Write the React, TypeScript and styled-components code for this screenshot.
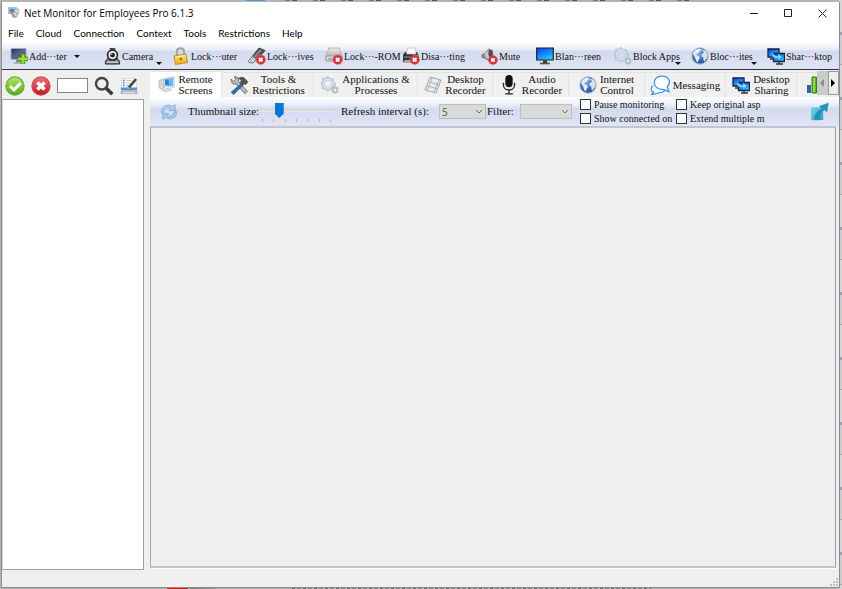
import React from "react";
import styled, { createGlobalStyle } from "styled-components";

const serif = `"Liberation Serif", "Noto Sans CJK SC", serif`;
const sans = `"Open Sans", "Noto Sans CJK SC", sans-serif`;
const menuSans = `Lato, "Noto Sans CJK SC", sans-serif`;

const GlobalStyle = createGlobalStyle`
  * { box-sizing: border-box; }
  body { margin: 0; background: #cfcfcf; overflow: hidden; }
  button, input, select { font: inherit; color: inherit; margin: 0; }
  button { border: 0; padding: 0; background: none; }
  svg { display: block; flex: none; }
`;

const Desktop = styled.div`
  height: 100vh;
  padding: 2px 2px 1px 1px;
  background:
    linear-gradient(90deg, #d92a2a, #b81e1e) 167px 100% / 21px 2px no-repeat,
    linear-gradient(90deg, #777, #999) 190px 100% / 26px 2px no-repeat,
    repeating-linear-gradient(90deg, #666 0 3px, #b8b8b8 3px 5px, #858585 5px 9px, #c4c4c4 9px 11px) 292px 100% / 360px 1px no-repeat,
    repeating-linear-gradient(90deg, #777 0 5px, #bbb 5px 7px, #555 7px 12px, #b3b3b3 12px 28px) 285px 0 / 410px 1px no-repeat,
    linear-gradient(90deg, #4f9bd0, #4f9bd0) 246px 0 / 19px 1px no-repeat,
    repeating-linear-gradient(180deg, #d6d6d6 0 32px, #9aa3b5 32px 35px, #cdcdcd 35px 64px, #a8a8a8 64px 65px) 100% 0 / 3px 100% no-repeat,
    #b4b4b4;
`;

const Window = styled.main`
  display: flex;
  flex-direction: column;
  height: 100%;
  border: 1px solid #8c8c8c;
  border-top: 0;
  background: #efefef;
  font-family: ${serif};
  font-size: 11px;
  line-height: 11px;
  color: #111;
`;

const TitleBar = styled.header`
  display: flex;
  align-items: center;
  height: 22px;
  padding-left: 6px;
  background: #fff;
`;

const Title = styled.h1`
  flex: 1;
  margin: 0 0 0 4px;
  font: 400 10px/16px ${sans};
  color: #000;
`;

const CaptionButton = styled.button`
  display: grid;
  place-items: center;
  width: 34px;
  height: 22px;
`;

const MenuBar = styled.nav`
  display: flex;
  gap: 12px;
  height: 18px;
  padding: 0 6px;
  background: #fff;
  font: 10px/18px ${menuSans};
  color: #000;
`;

const MenuItem = styled.button``;

const ToolBar = styled.div`
  display: grid;
  grid-template-columns: 94fr 68fr 76fr 77fr 77fr 79fr 55fr 78fr 77fr 76fr 72fr;
  flex: none;
  height: 28px;
  padding: 1px 0 0 8px;
  border-bottom: 1px solid #30323a;
  background: linear-gradient(#fff 0, #e7ebf7 8px, #d3daee 9px, #dfe4f5 100%);
  font-size: 10px;
`;

const ToolButton = styled.button`
  position: relative;
  display: flex;
  align-items: center;
  gap: 1px;
  min-width: 0;
  white-space: nowrap;
  text-align: left;
`;

const Arrow = styled.span`
  margin-left: 6px;
  border: 3px solid transparent;
  border-top-color: #111;
  border-bottom: 0;
`;

const CornerArrow = styled(Arrow)`
  position: absolute;
  right: 10px;
  bottom: 4px;
`;

const Body = styled.div`
  display: flex;
  flex: 1;
  min-height: 0;
`;

const Sidebar = styled.aside`
  display: flex;
  flex-direction: column;
  width: 142px;
`;

const SideTools = styled.div`
  display: flex;
  align-items: center;
  gap: 6px;
  height: 29px;
  padding: 2px 0 0 3px;
`;

const IconButton = styled.button`
  display: grid;
  place-items: center;
  justify-self: start;
`;

const SearchBox = styled.input`
  width: 31px;
  height: 15px;
  padding: 0 2px;
  border: 1px solid #858585;
  background: #fff;
`;

const ComputerList = styled.section`
  flex: 1;
  border: 1px solid #9c9ea4;
  border-left-color: #d3d3d6;
  background: #fff;
`;

const Content = styled.section`
  display: flex;
  flex: 1;
  flex-direction: column;
  min-width: 0;
  padding: 1px 0 2px;
  margin-left: 6px;
`;

const TabRow = styled.div`
  display: flex;
  height: 26px;
`;

const Tabs = styled.div`
  display: flex;
  flex: 1;
  min-width: 0;
  overflow: hidden;
`;

const Tab = styled.button<{ $width: number; $active?: boolean }>`
  display: flex;
  flex: none;
  align-items: center;
  justify-content: center;
  gap: 3px;
  width: ${(p) => p.$width}px;
  margin-top: ${(p) => (p.$active ? 0 : 1)}px;
  border: 1px solid #e2e2e2;
  border-width: 1px 1px 0 0;
  background: ${(p) => (p.$active ? "#fff" : "#f0f0f0")};
`;

const TabLabel = styled.span`
  text-align: center;
  white-space: pre;
`;

const Scroller = styled.button<{ $end?: boolean }>`
  display: grid;
  place-items: center;
  width: 11px;
  height: 24px;
  border: 1px solid ${(p) => (p.$end ? "#9b9b9b" : "#c9c9c9")};
  background: ${(p) => (p.$end ? "#ededed" : "#cbcbcb")};
`;

const Controls = styled.div`
  display: grid;
  grid-template-columns: 28px 70px 83px 98px 48px 33px 60px 96px 96px 1fr;
  align-items: center;
  flex: none;
  height: 29px;
  padding: 0 10px;
  background: linear-gradient(#fff 0, #e9edf8 8px, #d4dbef 12px, #dfe4f5 100%);
`;

const Label = styled.label`
  white-space: nowrap;
`;

const SliderBox = styled.div`
  width: 76px;
  padding-top: 1px;
`;

const Slider = styled.input`
  display: block;
  width: 76px;
  height: 16px;
  appearance: none;
  background: linear-gradient(#d0d0d0, #e9e9e9) 0 6px / 100% 3px no-repeat;
  &::-webkit-slider-thumb {
    appearance: none;
    width: 9px;
    height: 15px;
    background: #0878d4;
    clip-path: polygon(0 0, 100% 0, 100% 72%, 50% 100%, 0 72%);
  }
`;

const Ticks = styled.div`
  display: flex;
  justify-content: space-between;
  padding: 0 3px 0 4px;
`;

const Tick = styled.i`
  width: 1px;
  height: 3px;
  background: #b4b4b0;
`;

const SelectBox = styled.span<{ $width: number }>`
  display: grid;
  align-items: center;
  width: ${(p) => p.$width}px;
  & > * { grid-area: 1 / 1; }
  & > svg { justify-self: end; margin-right: 3px; pointer-events: none; }
`;

const Select = styled.select`
  width: 100%;
  height: 15px;
  padding: 0 2px;
  appearance: none;
  border: 1px solid #bdbdbd;
  border-radius: 0;
  background: #dadada;
  font: 10px/12px ${sans};
  color: #555;
`;

const Checks = styled.div`
  display: flex;
  flex-direction: column;
  gap: 3px;
  padding-bottom: 1px;
  font-size: 10px;
`;

const CheckLabel = styled.label`
  display: flex;
  align-items: center;
  gap: 3px;
  white-space: nowrap;
`;

const Check = styled.input`
  flex: none;
  appearance: none;
  width: 11px;
  height: 11px;
  border: 1px solid #333;
  background: #fff;
`;

const ExpandButton = styled.button`
  justify-self: end;
`;

const Screens = styled.div`
  flex: 1;
  margin-right: 3px;
  border: 2px solid #c3c5cf;
  border-left: 1px solid #a2a5b0;
  border-right: 1px solid #9a9da8;
  box-shadow: 0 1px 0 #fff;
  background: #efefef;
`;

const StatusBar = styled.footer`
  display: flex;
  flex: none;
  justify-content: flex-end;
  align-items: flex-end;
  height: 17px;
  padding: 1px;
`;

const HiddenSvg = styled.svg`
  position: absolute;
`;

type P = { s?: number };
const Svg = ({ s = 18, children }: P & { children: React.ReactNode }) => (
  <svg width={s} height={s} viewBox="0 0 18 18" fill="none" aria-hidden="true">{children}</svg>
);

const Gradients = () => (
  <HiddenSvg width="0" height="0" aria-hidden="true">
    <defs>
      <linearGradient id="blue" x1="0" y1="0" x2=".6" y2="1"><stop stopColor="#0a3cf0" /><stop offset="1" stopColor="#22c4ff" /></linearGradient>
      <linearGradient id="slate" x1="0" y1="0" x2="1" y2="1"><stop stopColor="#202858" /><stop offset=".5" stopColor="#5a6794" /><stop offset="1" stopColor="#323c69" /></linearGradient>
      <linearGradient id="gold" x1="0" y1="0" x2="0" y2="1"><stop stopColor="#ffe680" /><stop offset="1" stopColor="#e9aa0d" /></linearGradient>
      <linearGradient id="silver" x1="0" y1="0" x2="0" y2="1"><stop stopColor="#eee" /><stop offset="1" stopColor="#969696" /></linearGradient>
      <linearGradient id="green" x1="0" y1="0" x2="0" y2="1"><stop stopColor="#b7e66a" /><stop offset="1" stopColor="#48ad0d" /></linearGradient>
      <linearGradient id="red" x1="0" y1="0" x2="0" y2="1"><stop stopColor="#ee7676" /><stop offset="1" stopColor="#c4141e" /></linearGradient>
      <linearGradient id="teal" x1="0" y1="0" x2="1" y2="1"><stop stopColor="#7cd3e8" /><stop offset="1" stopColor="#2a9fc0" /></linearGradient>
      <radialGradient id="globe" cx=".4" cy=".35"><stop stopColor="#7cb1e6" /><stop offset="1" stopColor="#2a62ad" /></radialGradient>
    </defs>
  </HiddenSvg>
);

const RedBadge = () => (
  <g>
    <circle cx="12.7" cy="12.7" r="4.800" fill="#d92c34" stroke="#c78080" strokeWidth=".6" />
    <path d="m10.900 10.900 3.600 3.600m0-3.600-3.600 3.600" stroke="#fff" strokeWidth="1.800" />
  </g>
);
const AddComputer = () => (
  <Svg><path d="M1 1.500h15v11H1z" fill="url(#slate)" stroke="#a8acba" /><path d="M6 13h5v2.500H6z" fill="#888" /><path d="M3.500 16h9" stroke="#a7a7a7" strokeWidth="1.500" /><path d="M13 7v10M8 12h10" stroke="#539720" strokeWidth="4.400" /><path d="M13 7.500v9M8.500 12h9" stroke="#9adf35" strokeWidth="2.600" /></Svg>
);
const Camera = () => (
  <Svg s={17}><path d="M1.500 14 4.500 10.500h9l3 3.500v3h-15z" fill="#777" stroke="#292929" /><path d="M3 15h12" stroke="#ddd" strokeWidth="1.400" /><circle cx="9" cy="7.500" r="5.200" fill="#eee" stroke="#292929" strokeWidth="1.800" /><circle cx="9" cy="7.500" r="2.600" fill="#222" /><circle cx="8" cy="6.500" r=".9" fill="#aaa" /><path d="M6 1h6" stroke="#222" strokeWidth="1.600" /></Svg>
);
const Padlock = () => (
  <Svg><path d="M5 9V4.500C5 .4 12 .4 12 4.500V8" stroke="#a7a7a7" strokeWidth="2.200" /><path d="m2 9 12-2 1.500 8.500L3.500 17.500z" fill="url(#gold)" stroke="#c48d16" /><path d="m3.500 10 9.500-1.500" stroke="#fff0a5" /><circle cx="8.800" cy="12" r="1.200" fill="#805c14" /></Svg>
);
const UsbLock = () => (
  <Svg><path d="M3 11 11 1l6 2.500L8 14z" fill="#555" stroke="#444" /><path d="m5 10 7-7.500 2 .8L7 11z" fill="#8a8a8a" /><path d="m.5 13.500 4-4 4 2.500-3.500 4-4-.5z" fill="#ddd" stroke="#777" /><path d="m2.500 13 1 .5m1-2 1 .6" stroke="#555" /><RedBadge /></Svg>
);
const DriveLock = () => (
  <Svg><path d="M4 1h10l3 8v4H1V9z" fill="url(#silver)" stroke="#b2b2b2" /><path d="M1 9h16v5H1z" fill="#dadada" stroke="#999" /><path d="M3 12h5" stroke="#888" /><RedBadge /></Svg>
);
const PrinterLock = () => (
  <Svg><path d="M3 5h12l2 4v6H1V8z" fill="#333" /><path d="M5.500 1h8l.5 6H4.500z" fill="#f8f8f8" stroke="#bbb" strokeWidth=".7" /><path d="M2.500 13h11l1 3H1.500z" fill="#aaa" /><path d="M2 10h6" stroke="#999" /><path d="M16 7v2" stroke="#47cf30" strokeWidth="1.500" /><RedBadge /></Svg>
);
const MuteIcon = () => (
  <Svg s={17}><path d="m1 7 3-1 4-5 4 1.500 1 11-3 1.500-5-4-4-1z" fill="#8c8c8c" stroke="#777" /><path d="m4 6 4-4.500 1 10.500-4-2z" fill="#c9c9c9" /><ellipse cx="10.300" cy="7" rx="2.300" ry="5" fill="#4a4a4a" transform="rotate(-8 10 7)" /><RedBadge /></Svg>
);
const BlueScreen = () => (
  <Svg><path d="M.7 1h16.600v12H.7z" fill="url(#blue)" stroke="#222" strokeWidth="1.200" /><path d="M7 13.500h4V16H7z" fill="#333" /><path d="M4 16.500h10" stroke="#555" strokeWidth="1.600" /></Svg>
);
const Gears = () => (
  <Svg><path d="M6 .8h2l.5 1.600 1.600.7 1.500-.8 1.300 1.300-.7 1.500.7 1.600 1.600.5v2l-1.600.5-.7 1.600.7 1.500-1.300 1.200-1.500-.7-1.600.7L8 15H6l-.5-1.500-1.600-.7-1.500.7-1.300-1.200.7-1.600-.6-1.500L0 8.500v-2l1.200-.4.6-1.600L1.100 3l1.300-1.300 1.500.8 1.600-.7zM7 4a3.700 3.700 0 1 0 0 7.400A3.700 3.700 0 0 0 7 4z" fill="#c3d3df" stroke="#a2b7c6" strokeWidth=".6" fillRule="evenodd" /><circle cx="7" cy="7.700" r="4.400" stroke="#e4eef6" /><circle cx="14" cy="14" r="2.500" stroke="#aabecb" strokeWidth="1.800" /></Svg>
);
const Globe = () => (
  <Svg><circle cx="9" cy="9" r="8.200" fill="url(#globe)" stroke="#a9b7cb" strokeWidth=".9" /><path d="M2 7C2.500 4 5 2 8.500 1.500l1.500 1-1.500 1.300-.5 1.700-2 1-.8 1.500 2.500 1 1.300 1.800L7.500 13l-1 2.800L5 13.500 4.200 10.500z" fill="#e5ebee" /><path d="m12 3 2.800.8L16.800 8l-.8 3.500-1.200.5-.8 2.500-1.500-1-.3-3-1.700-1.200.3-2.300 2-1z" fill="#dbe4ea" /><path d="M4 3.500Q9 .3 14 3.500 9 5.500 4 3.500z" fill="#fff" opacity=".45" /></Svg>
);
const ShareScreens = () => (
  <Svg><path d="M1 2h11v8H1z" fill="url(#blue)" stroke="#16233a" strokeWidth="1.300" /><path d="M3 12h4" stroke="#333" strokeWidth="1.500" /><path d="M6.500 6.500h11v8h-11z" fill="url(#blue)" stroke="#16233a" strokeWidth="1.300" /><path d="M9 17h7M12 15v2" stroke="#333" strokeWidth="1.500" /><path d="M5 4c-1 6 2 8 6 7.500v2.300l4.500-4L11 6.500V9C8 9 6 7.500 5 4z" fill="#7fd6ff" stroke="#1670c0" strokeWidth=".5" /></Svg>
);
const Accept = () => (
  <Svg s={20}><circle cx="9" cy="9" r="8.200" fill="url(#green)" stroke="#69ab3d" /><path d="m4.500 9 3.600 3.500 6-6" stroke="#fff" strokeWidth="2.800" /></Svg>
);
const Reject = () => (
  <Svg s={20}><circle cx="9" cy="9" r="8.200" fill="url(#red)" stroke="#bc4b50" /><path d="m5.800 5.800 6.400 6.400m0-6.400-6.400 6.400" stroke="#fff" strokeWidth="3.200" /></Svg>
);
const Search = () => (
  <Svg s={20}><circle cx="7" cy="7" r="5.200" stroke="#444" strokeWidth="2.200" /><path d="m11 11 5.500 5.500" stroke="#3a3a3a" strokeWidth="3.200" /></Svg>
);
const EditList = () => (
  <Svg s={18}><path d="M2 1.500h14L17 13H1z" fill="#fafafa" stroke="#ddd" /><path d="M3 3.500h1.500M3 6h1.500M3 8.500h1.500" stroke="#3684c8" strokeWidth="1.500" /><path d="M6 3.500h6M6 6h4M6 8.500h3" stroke="#c5c5c5" /><path d="M1 10.500h16v3H1z" fill="#4e94d8" /><path d="M.5 14h17v3H.5z" fill="#b5b5b5" /><path d="M3 15.500h12" stroke="#e7e7e7" /><path d="m7 12.500 1-3L15 1.500l2 1.200-7 8.500z" fill="#444" /><path d="m7 12.500 1-3 2 1.700z" fill="#e0b27a" /></Svg>
);
const Remote = () => (
  <Svg s={17}><path d="m1 4.500 6-1.500v9.500L2.500 14 1 12z" fill="#d6d6d6" stroke="#b5b5b5" strokeWidth=".7" /><path d="m6 2.500 11-1.500v11L6 11z" fill="#eee" stroke="#b0b5bb" strokeWidth=".8" /><path d="m7.300 3.700 8.500-1.200v8L7.300 9.700z" fill="#1b86e6" /><path d="m11 3.200 4.800-.7v8l-3.800-.3z" fill="#6bbcf6" /><path d="m4 15 7-2 3.500 1.200-6 2.800z" fill="#e2e2e2" stroke="#b0b0b0" strokeWidth=".7" /></Svg>
);
const Tools = () => (
  <Svg s={19}><path d="m1 3 2.500 2.200L5.500 3 4 .8c3-.5 4.800 1.500 4 4.200l8.500 9.500-2.300 2.300L5.800 7.500C3 8.500.6 6.300 1 3z" fill="#b5b8bb" stroke="#666" strokeWidth=".8" /><path d="m11.500 6.500 1.500 1.500-9.500 9.500-2.500-2z" fill="#2f6cad" stroke="#234d7c" strokeWidth=".6" /><path d="M8 2.500C10.500.5 13 1 14.500 3l2.500 2.500-2 2.500-1.500-.7-2 1-2-2 1.200-1.800C10.500 3.300 9.500 2.800 8 2.500z" fill="#555" stroke="#333" strokeWidth=".6" /></Svg>
);
const Film = () => (
  <Svg><path d="m6 1 11 3-5 13L1 14z" fill="#e8edf0" stroke="#93989d" strokeWidth=".8" /><path d="m8 2-5 12M15 4l-5 12M5.500 6l10 3M3.500 10l10 3" stroke="#9aa0a6" strokeWidth=".8" /></Svg>
);
const Mic = () => (
  <Svg s={20}><rect x="5.700" y="0" width="6.600" height="11" rx="3.300" fill="#111" /><path d="M4 7v2c0 6 10 6 10 0V7M9 13v4M5.500 17h7" stroke="#222" strokeWidth="1.200" /></Svg>
);
const Chat = () => (
  <Svg s={20}><path d="M3 9.500c-3 2-2.300 5 .5 6L1.500 17.500c3 0 5-.8 6.500-1.500 3 0 5-1 5.500-3" fill="#fff" stroke="#2f8be2" /><path d="M15.500 10.500 17 15l-5-2C2 14 1 1 10.500 1c7.500 0 8.500 6 5 9.500z" fill="#fff" stroke="#3a96ec" strokeWidth="1.200" /></Svg>
);
const Chart = () => (
  <Svg><path d="M1 9h4v8H1z" fill="#246b9d" /><path d="M6 1h4.500v16H6z" fill="#62ae22" stroke="#38810f" /><path d="M8 2v14" stroke="#a8dc72" strokeWidth="1.500" /><path d="M12 6h4v11h-4z" fill="#dd781c" /></Svg>
);
const Refresh = () => (
  <Svg><path d="M1.200 9.500C.8 3.500 7 0 12.500 3.500L15 1.500 15.500 8l-6.500-.8 2-1.700C8 3.800 4.500 5.500 4 9z" fill="#a9d0ee" stroke="#7ba5c8" strokeWidth=".7" /><path d="M16.800 8.500C17.200 14.500 11 18 5.500 14.500L3 16.500 2.500 10l6.500.8-2 1.700c3 1.700 6.500 0 7-3.500z" fill="#9cc6ea" stroke="#7ba5c8" strokeWidth=".7" /></Svg>
);
const Expand = () => (
  <Svg s={19}><path d="M1 5h11.500v12H1z" fill="url(#teal)" /><path d="M4 17c0-5 2.500-8.500 7.200-10.500L9 4l8.500-3-1.500 8.500-2.300-2C11 9 9.500 12 9.500 17z" fill="#1d93b8" stroke="#2fa6c6" strokeWidth=".5" /></Svg>
);
const AppIcon = () => (
  <Svg s={12}><path d="M1 1h12v9H1z" fill="#b4c1d3" stroke="#8c94a2" /><path d="M3 3h8v5H3z" fill="#4d80bd" /><path d="m9 4 7-1v7l-5 2z" fill="#cfdfeb" stroke="#8b98a6" /><circle cx="10" cy="12" r="4" fill="#ddd" stroke="#888" /><path d="m5 9 6 6" stroke="#c07878" strokeWidth="2" /></Svg>
);
const Chevron = () => (
  <svg width="8" height="6" viewBox="0 0 8 6"><path d="m1 1 3 3 3-3" stroke="#666" fill="none" /></svg>
);

const toolItems = [
  { icon: <AddComputer />, text: "Add···ter", arrow: "side" },
  { icon: <Camera />, text: "Camera", arrow: "corner" },
  { icon: <Padlock />, text: "Lock···uter" },
  { icon: <UsbLock />, text: "Lock···ives" },
  { icon: <DriveLock />, text: "Lock···-ROM" },
  { icon: <PrinterLock />, text: "Disa···ting" },
  { icon: <MuteIcon />, text: "Mute" },
  { icon: <BlueScreen />, text: "Blan···reen" },
  { icon: <Gears />, text: "Block Apps", arrow: "corner" },
  { icon: <Globe />, text: "Bloc···ites", arrow: "corner" },
  { icon: <ShareScreens />, text: "Shar···ktop" },
];

const tabItems = [
  { icon: <Remote />, text: "Remote\nScreens", width: 72 },
  { icon: <Tools />, text: "Tools &\nRestrictions", width: 92 },
  { icon: <Gears />, text: "Applications &\nProcesses", width: 104 },
  { icon: <Film />, text: "Desktop\nRecorder", width: 75 },
  { icon: <Mic />, text: "Audio\nRecorder", width: 76 },
  { icon: <Globe />, text: "Internet\nControl", width: 76 },
  { icon: <Chat />, text: "Messaging", width: 81 },
  { icon: <ShareScreens />, text: "Desktop\nSharing", width: 71 },
  { icon: <Chart />, text: "", width: 36 },
];

const menus = ["File", "Cloud", "Connection", "Context", "Tools", "Restrictions", "Help"];

export default function App() {
  return (
    <Desktop>
      <GlobalStyle />
      <Gradients />
      <Window>
        <TitleBar>
          <AppIcon />
          <Title>Net Monitor for Employees Pro 6.1.3</Title>
          <CaptionButton aria-label="Minimize"><svg width="9" height="9"><path d="M0 4.500h8" stroke="#222" /></svg></CaptionButton>
          <CaptionButton aria-label="Maximize"><svg width="9" height="9"><path d="M.5.5h7v7h-7z" stroke="#222" fill="none" /></svg></CaptionButton>
          <CaptionButton aria-label="Close"><svg width="9" height="9"><path d="m.5.5 8 8m0-8-8 8" stroke="#222" /></svg></CaptionButton>
        </TitleBar>
        <MenuBar>{menus.map((m) => <MenuItem key={m}>{m}</MenuItem>)}</MenuBar>
        <ToolBar>
          {toolItems.map((t) => (
            <ToolButton key={t.text}>
              {t.icon}
              <span>{t.text}</span>
              {t.arrow === "side" && <Arrow />}
              {t.arrow === "corner" && <CornerArrow />}
            </ToolButton>
          ))}
        </ToolBar>
        <Body>
          <Sidebar>
            <SideTools>
              <IconButton aria-label="Accept"><Accept /></IconButton>
              <IconButton aria-label="Cancel"><Reject /></IconButton>
              <SearchBox aria-label="Search computers" />
              <IconButton aria-label="Search"><Search /></IconButton>
              <IconButton aria-label="Edit list"><EditList /></IconButton>
            </SideTools>
            <ComputerList aria-label="Computers" />
          </Sidebar>
          <Content>
            <TabRow>
              <Tabs role="tablist">
                {tabItems.map((t, i) => (
                  <Tab key={i} role="tab" aria-selected={i === 0} aria-label={t.text || "Statistics"} $width={t.width} $active={i === 0}>
                    {t.icon}
                    {t.text && <TabLabel>{t.text}</TabLabel>}
                  </Tab>
                ))}
              </Tabs>
              <Scroller aria-label="Previous tabs"><svg width="5" height="8"><path d="M4 0v8L0 4z" fill="#8c8c8c" /></svg></Scroller>
              <Scroller $end aria-label="More tabs"><svg width="5" height="8"><path d="M0 0v8l4-4z" fill="#000" /></svg></Scroller>
            </TabRow>
            <Controls>
              <IconButton aria-label="Refresh"><Refresh /></IconButton>
              <Label htmlFor="size">Thumbnail size:</Label>
              <SliderBox>
                <Slider id="size" type="range" min="0" max="6" step="0.1" defaultValue="1.5" />
                <Ticks>{[0, 1, 2, 3, 4, 5, 6].map((n) => <Tick key={n} />)}</Ticks>
              </SliderBox>
              <Label htmlFor="interval">Refresh interval (s):</Label>
              <SelectBox $width={47}><Select id="interval"><option>5</option></Select><Chevron /></SelectBox>
              <Label htmlFor="filter">Filter:</Label>
              <SelectBox $width={52}><Select id="filter"><option /></Select><Chevron /></SelectBox>
              <Checks>
                <CheckLabel><Check type="checkbox" />Pause monitoring</CheckLabel>
                <CheckLabel><Check type="checkbox" />Show connected on</CheckLabel>
              </Checks>
              <Checks>
                <CheckLabel><Check type="checkbox" />Keep original asp</CheckLabel>
                <CheckLabel><Check type="checkbox" />Extend multiple m</CheckLabel>
              </Checks>
              <ExpandButton aria-label="Full screen"><Expand /></ExpandButton>
            </Controls>
            <Screens />
          </Content>
        </Body>
        <StatusBar>
          <svg width="8" height="8" fill="#bcbcbc"><path d="M6 0h2v2H6zM3 3h2v2H3zM6 3h2v2H6zM0 6h2v2H0zM3 6h2v2H3zM6 6h2v2H6z" /></svg>
        </StatusBar>
      </Window>
    </Desktop>
  );
}
